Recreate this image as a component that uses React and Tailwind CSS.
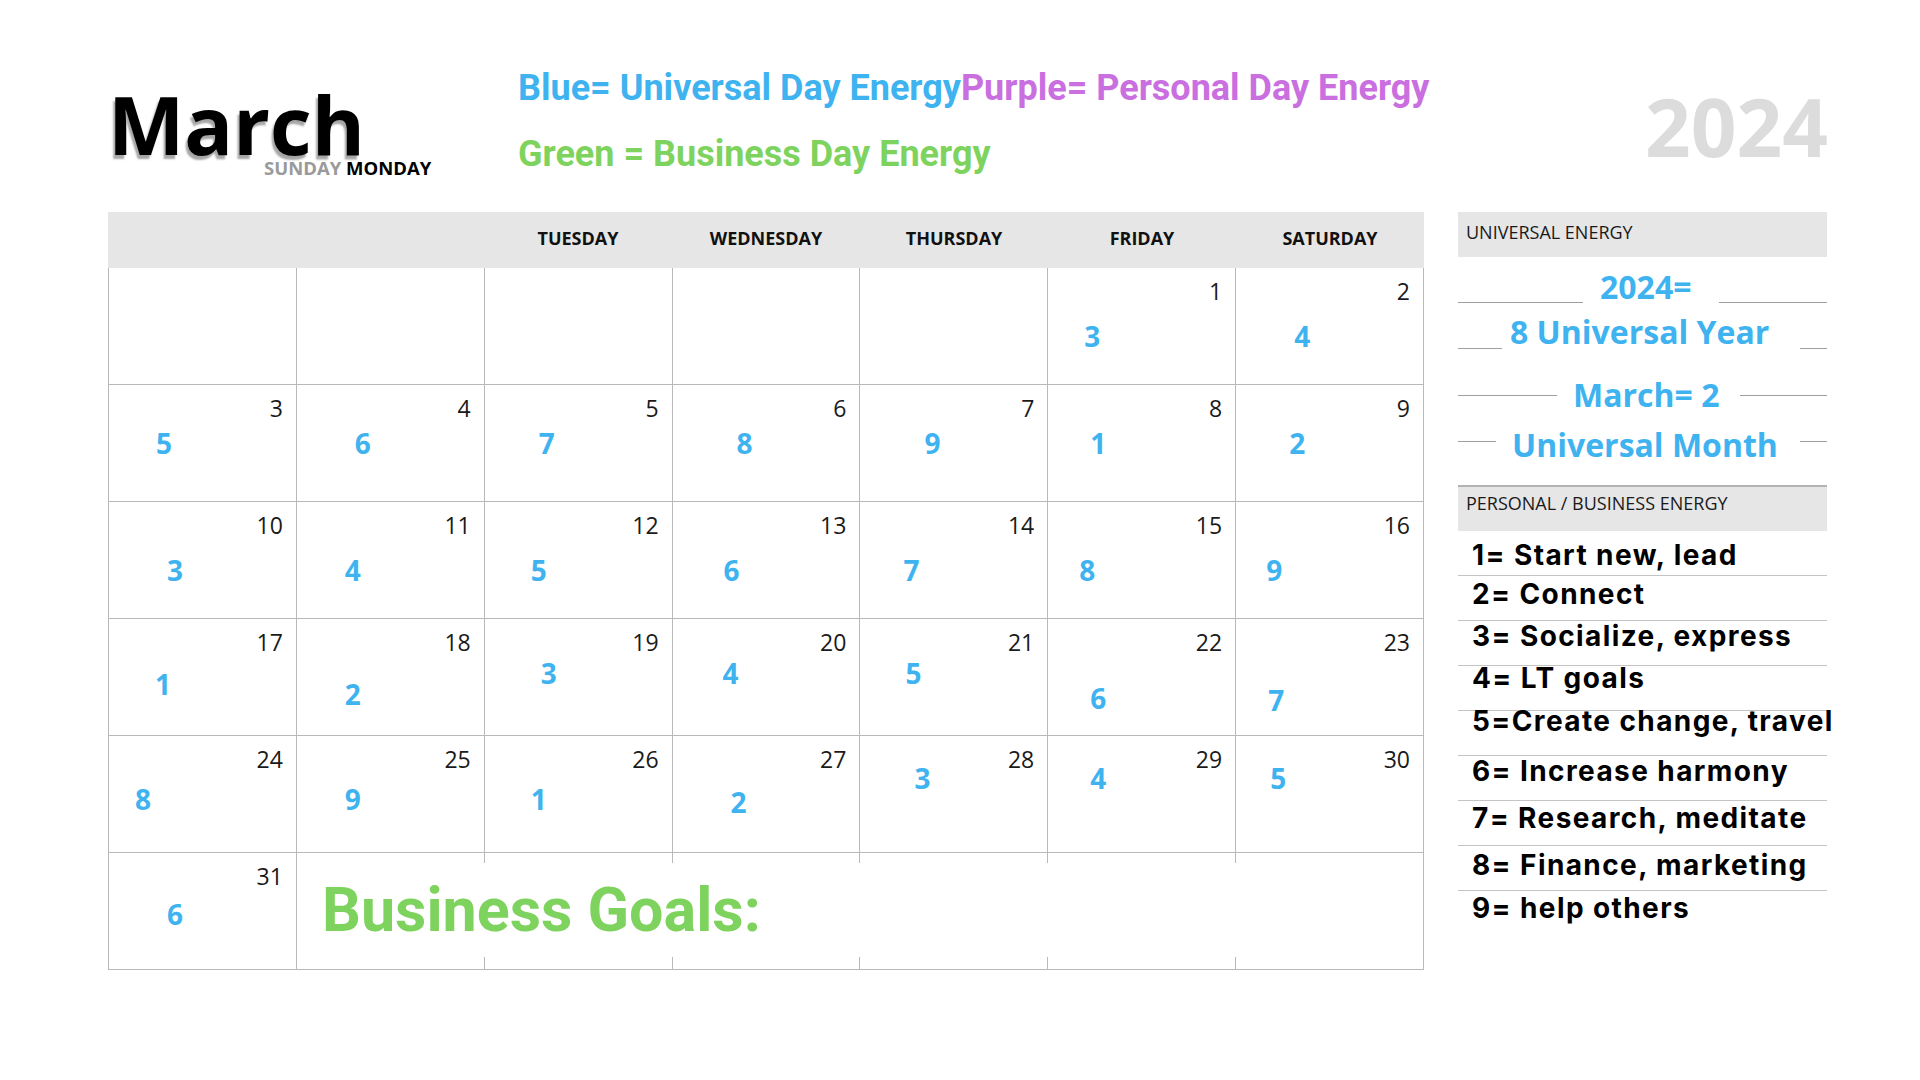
import React from 'react';

const days = ['', '', 'TUESDAY', 'WEDNESDAY', 'THURSDAY', 'FRIDAY', 'SATURDAY'];

const weeks = [
    [null, null, null, null, null,
        { d: 1, n: 3, c: 'ml-[36px] mt-[11px]' },
        { d: 2, n: 4, c: 'ml-[58px] mt-[11px]' }],
    [{ d: 3, n: 5, c: 'ml-[47px] mt-[1px]' },
        { d: 4, n: 6, c: 'ml-[58px] mt-[1px]' },
        { d: 5, n: 7, c: 'ml-[54px] mt-[1px]' },
        { d: 6, n: 8, c: 'ml-[64px] mt-[1px]' },
        { d: 7, n: 9, c: 'ml-[64px] mt-[1px]' },
        { d: 8, n: 1, c: 'ml-[42px] mt-[1px]' },
        { d: 9, n: 2, c: 'ml-[53px] mt-[1px]' }],
    [{ d: 10, n: 3, c: 'ml-[58px] mt-[11px]' },
        { d: 11, n: 4, c: 'ml-[48px] mt-[11px]' },
        { d: 12, n: 5, c: 'ml-[46px] mt-[11px]' },
        { d: 13, n: 6, c: 'ml-[51px] mt-[11px]' },
        { d: 14, n: 7, c: 'ml-[43px] mt-[11px]' },
        { d: 15, n: 8, c: 'ml-[31px] mt-[11px]' },
        { d: 16, n: 9, c: 'ml-[30px] mt-[11px]' }],
    [{ d: 17, n: 1, c: 'ml-[46px] mt-[8px]' },
        { d: 18, n: 2, c: 'ml-[48px] mt-[18px]' },
        { d: 19, n: 3, c: 'ml-[56px] mt-[-3px]' },
        { d: 20, n: 4, c: 'ml-[50px] mt-[-3px]' },
        { d: 21, n: 5, c: 'ml-[45px] mt-[-3px]' },
        { d: 22, n: 6, c: 'ml-[42px] mt-[22px]' },
        { d: 23, n: 7, c: 'ml-[32px] mt-[24px]' }],
    [{ d: 24, n: 8, c: 'ml-[26px] mt-[6px]' },
        { d: 25, n: 9, c: 'ml-[48px] mt-[6px]' },
        { d: 26, n: 1, c: 'ml-[46px] mt-[6px]' },
        { d: 27, n: 2, c: 'ml-[58px] mt-[9px]' },
        { d: 28, n: 3, c: 'ml-[54px] mt-[-15px]' },
        { d: 29, n: 4, c: 'ml-[42px] mt-[-15px]' },
        { d: 30, n: 5, c: 'ml-[34px] mt-[-15px]' }],
];

const energyRows = [
    { text: '2024=', h: 'h-[45px]', lw: 'w-[125px]', gap: 'ml-[17px]', rw: 'w-[108px]', lm: 'mt-[35px]' },
    { text: '8 Universal Year', h: 'h-[63px]', lw: 'w-[44px]', gap: 'ml-[8px]', rw: 'w-[27px]', lm: 'mt-[36px]' },
    { text: 'March= 2', h: 'h-[50px]', lw: 'w-[99px]', gap: 'ml-[16px]', rw: 'w-[87px]', lm: 'mt-[20px]' },
    { text: 'Universal Month', h: 'h-[40px]', lw: 'w-[38px]', gap: 'ml-[16px]', rw: 'w-[27px]', lm: 'mt-[16px]' },
];

const meanings = [
    { t: '1= Start new, lead', c: 'mt-[9px]', line: true },
    { t: '2= Connect', c: 'mt-[3px]', line: true },
    { t: '3= Socialize, express', c: 'mt-0', line: true },
    { t: '4= LT goals', c: 'mt-[-3px]', line: true },
    { t: '5=Create change, travel', c: 'mt-[-5px]', line: true },
    { t: '6= Increase harmony', c: 'mt-0', line: true },
    { t: '7= Research, meditate', c: 'mt-[2px]', line: true },
    { t: '8= Finance, marketing', c: 'mt-[4px]', line: true },
    { t: '9= help others', c: 'mt-[2px]', line: false },
];

function DayCell({ cell }) {
    return (
        <div className="h-[117px] border-r border-b border-[#b9b9b9] pt-[8px] pr-[13px]">
            {cell && (
                <>
                    <div className="text-right text-[23px] leading-[31px] text-[#1a1a1a]">{cell.d}</div>
                    <div className={`w-fit text-[28px] leading-[36px] font-bold text-[#3fb3ef] ${cell.c}`}>{cell.n}</div>
                </>
            )}
        </div>
    );
}

export default function App() {
    return (
        <div className="w-[1920px] h-[1080px] bg-white overflow-hidden font-['Open_Sans',sans-serif]">
            {/* Top header */}
            <div className="h-[212px] flex items-start pl-[108px] pr-[92px] pt-[66px]">
                <div className="w-[410px] shrink-0 mt-[18px]">
                    <div className="text-[81px] leading-[80px] font-bold text-black [text-shadow:-2px_4px_2px_rgba(0,0,0,0.35)]">
                        March
                    </div>
                    <div className="ml-[156px] mt-[-6px] text-[18.5px] leading-[20px] font-bold">
                        <span className="text-[#9a9a9a]">SUNDAY</span> <span className="text-black">MONDAY</span>
                    </div>
                </div>
                <div className="font-['Roboto',sans-serif] font-bold text-[36px] leading-[44px]">
                    <div>
                        <span className="text-[#3fb3ef]">Blue= Universal Day Energy</span>
                        <span className="text-[#c96fe0]">Purple= Personal Day Energy</span>
                    </div>
                    <div className="mt-[22px] text-[#7ed35e]">Green = Business Day Energy</div>
                </div>
                <div className="ml-auto mt-[20px] text-[80px] leading-[80px] font-bold text-[#dcdcdc]">2024</div>
            </div>

            <div className="flex pl-[108px] gap-[34px]">
                {/* Calendar */}
                <div className="w-[1316px] shrink-0">
                    <div className="grid grid-cols-7 h-[56px] bg-[#e6e6e6] pb-[4px]">
                        {days.map((d, i) => (
                            <div key={i} className="flex items-center justify-center text-[18px] font-bold text-[#111]">{d}</div>
                        ))}
                    </div>
                    <div className="border-l border-[#b9b9b9]">
                        {weeks.map((w, wi) => (
                            <div key={wi} className="grid grid-cols-7">
                                {w.map((c, ci) => <DayCell key={ci} cell={c} />)}
                            </div>
                        ))}
                        <div className="relative grid grid-cols-7">
                            <DayCell cell={{ d: 31, n: 6, c: 'ml-[58px] mt-[4px]' }} />
                            {[0, 1, 2, 3, 4, 5].map(i => <DayCell key={i} cell={null} />)}
                            <div className="absolute left-[189px] right-[1px] top-[10px] bottom-[13px] bg-white flex items-center pl-[24px]">
                                <span className="font-['Roboto',sans-serif] font-bold text-[61px] leading-none text-[#7ed35e]">Business Goals:</span>
                            </div>
                        </div>
                    </div>
                </div>

                {/* Sidebar */}
                <div className="w-[369px] shrink-0">
                    <div className="h-[45px] bg-[#e6e6e6] pl-[8px] pt-[8px] text-[18px] leading-[24px] text-[#1a1a1a]">UNIVERSAL ENERGY</div>
                    <div className="mt-[10px]">
                        {energyRows.map(r => (
                            <div key={r.text} className={`flex items-start ${r.h}`}>
                                <div className={`h-px bg-[#9f9f9f] shrink-0 ${r.lw} ${r.lm}`} />
                                <div className={`text-[32px] leading-[40px] font-bold text-[#3fb3ef] whitespace-nowrap ${r.gap}`}>{r.text}</div>
                                <div className="flex-1" />
                                <div className={`h-px bg-[#9f9f9f] shrink-0 ${r.rw} ${r.lm}`} />
                            </div>
                        ))}
                    </div>
                    <div className="mt-[20px] h-[46px] bg-[#e6e6e6] border-t-2 border-[#b3b3b3] pl-[8px] pt-[4px] text-[18px] leading-[24px] text-[#1a1a1a]">
                        PERSONAL / BUSINESS ENERGY
                    </div>
                    <div>
                        {meanings.map(m => (
                            <div key={m.t} className={`h-[45px] flex flex-col ${m.line ? 'border-b border-[#c4c4c4]' : ''}`}>
                                <div className={`pl-[14px] whitespace-nowrap font-['Inter',sans-serif] font-bold text-[28px] leading-[30px] tracking-[1.4px] text-black ${m.c}`}>{m.t}</div>
                            </div>
                        ))}
                    </div>
                </div>
            </div>
        </div>
    );
}
